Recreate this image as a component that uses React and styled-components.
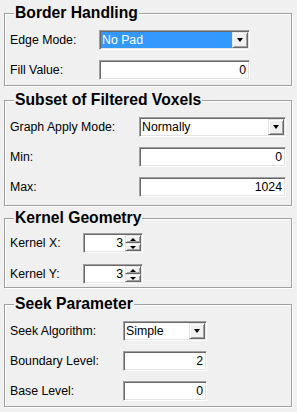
import React from 'react'
import styled, { createGlobalStyle } from 'styled-components'

const GlobalStyle = createGlobalStyle`
  html, body {
    margin:0;
    padding:0;
    background:#f0f0f0;
  }
  body {
    font-family:"Liberation Sans", Arial, sans-serif;
    font-size:12.3px;
    color:#000;
  }
`

const Panel = styled.div`
  width:297px;
  height:412px;
  display:flex;
  flex-direction:column;
  overflow:hidden;
`

const Group = styled.section`
  margin:${p => p.$mt}px 5px 0 4px;
  padding:0 5px ${p => p.$pb}px 5px;
  border:1px solid #a0a0a0;
  box-shadow:inset 1px 1px 0 #fff, 1px 1px 0 #fff;
  display:flex;
  flex-direction:column;
  align-items:flex-start;
`

const Title = styled.h2`
  margin:-10px 0 ${p => p.$gap ?? 8}px 4px;
  padding:0 1px;
  background:#f0f0f0;
  font-size:15.7px;
  font-weight:bold;
  line-height:18px;
`

const Fields = styled.div`
  display:grid;
  grid-template-columns:${p => p.$label}px ${p => p.$width}px;
  row-gap:${p => p.$gap ?? 10}px;
  align-items:center;
`

const Label = styled.label`
  line-height:20px;
  white-space:nowrap;
`

const Sunken = styled.div`
  box-sizing:border-box;
  height:20px;
  padding:1px;
  border:1px solid;
  border-color:#a0a0a0 #fff #fff #a0a0a0;
  box-shadow:inset 1px 1px 0 #696969, inset -1px -1px 0 #e3e3e3;
  background:#fff;
  display:flex;
`

const Value = styled.span`
  flex:1;
  line-height:16px;
  padding:${p => (p.$right ? '0 2px 0 0' : '0 0 0 1px')};
  text-align:${p => (p.$right ? 'right' : 'left')};
  background:${p => (p.$selected ? '#3399ff' : 'transparent')};
  color:${p => (p.$selected ? '#fff' : '#000')};
  white-space:nowrap;
  overflow:hidden;
`

const Raised = styled.span`
  box-sizing:border-box;
  width:16px;
  height:${p => p.$h}px;
  border:1px solid;
  border-color:#e3e3e3 #696969 #696969 #e3e3e3;
  box-shadow:inset 1px 1px 0 #fff, inset -1px -1px 0 #a0a0a0;
  background:#f0f0f0;
  display:flex;
  align-items:center;
  justify-content:center;
`

const Arrow = styled.span`
  width:0;
  height:0;
  border-left:${p => p.$w}px solid transparent;
  border-right:${p => p.$w}px solid transparent;
  ${p => (p.$up ? 'border-bottom' : 'border-top')}:${p => p.$h}px solid #000;
`

const SpinStack = styled.span`
  display:flex;
  flex-direction:column;
`

const Combo = ({ value, selected }) => (
  <Sunken>
    <Value $selected={selected}>{value}</Value>
    <Raised $h={16}>
      <Arrow $w={3.5} $h={4} />
    </Raised>
  </Sunken>
)

const TextBox = ({ value }) => (
  <Sunken>
    <Value $right>{value}</Value>
  </Sunken>
)

const Spinner = ({ value }) => (
  <Sunken>
    <Value $right>{value}</Value>
    <SpinStack>
      <Raised $h={8}>
        <Arrow $up $w={3} $h={3} />
      </Raised>
      <Raised $h={8}>
        <Arrow $w={3} $h={3} />
      </Raised>
    </SpinStack>
  </Sunken>
)

export default function App() {
  return (
    <Panel>
      <GlobalStyle />
      <Group $mt={13} $pb={5}>
        <Title>Border Handling</Title>
        <Fields $label={89} $width={151}>
          <Label>Edge Mode:</Label>
          <Combo value="No Pad" selected />
          <Label>Fill Value:</Label>
          <TextBox value="0" />
        </Fields>
      </Group>

      <Group $mt={14} $pb={8}>
        <Title>Subset of Filtered Voxels</Title>
        <Fields $label={129} $width={147}>
          <Label>Graph Apply Mode:</Label>
          <Combo value="Normally" />
          <Label>Min:</Label>
          <TextBox value="0" />
          <Label>Max:</Label>
          <TextBox value="1024" />
        </Fields>
      </Group>

      <Group $mt={12} $pb={3}>
        <Title $gap={6}>Kernel Geometry</Title>
        <Fields $label={73} $width={60} $gap={11}>
          <Label>Kernel X:</Label>
          <Spinner value="3" />
          <Label>Kernel Y:</Label>
          <Spinner value="3" />
        </Fields>
      </Group>

      <Group $mt={16} $pb={5}>
        <Title>Seek Parameter</Title>
        <Fields $label={113} $width={84}>
          <Label>Seek Algorithm:</Label>
          <Combo value="Simple" />
          <Label>Boundary Level:</Label>
          <TextBox value="2" />
          <Label>Base Level:</Label>
          <TextBox value="0" />
        </Fields>
      </Group>
    </Panel>
  )
}
